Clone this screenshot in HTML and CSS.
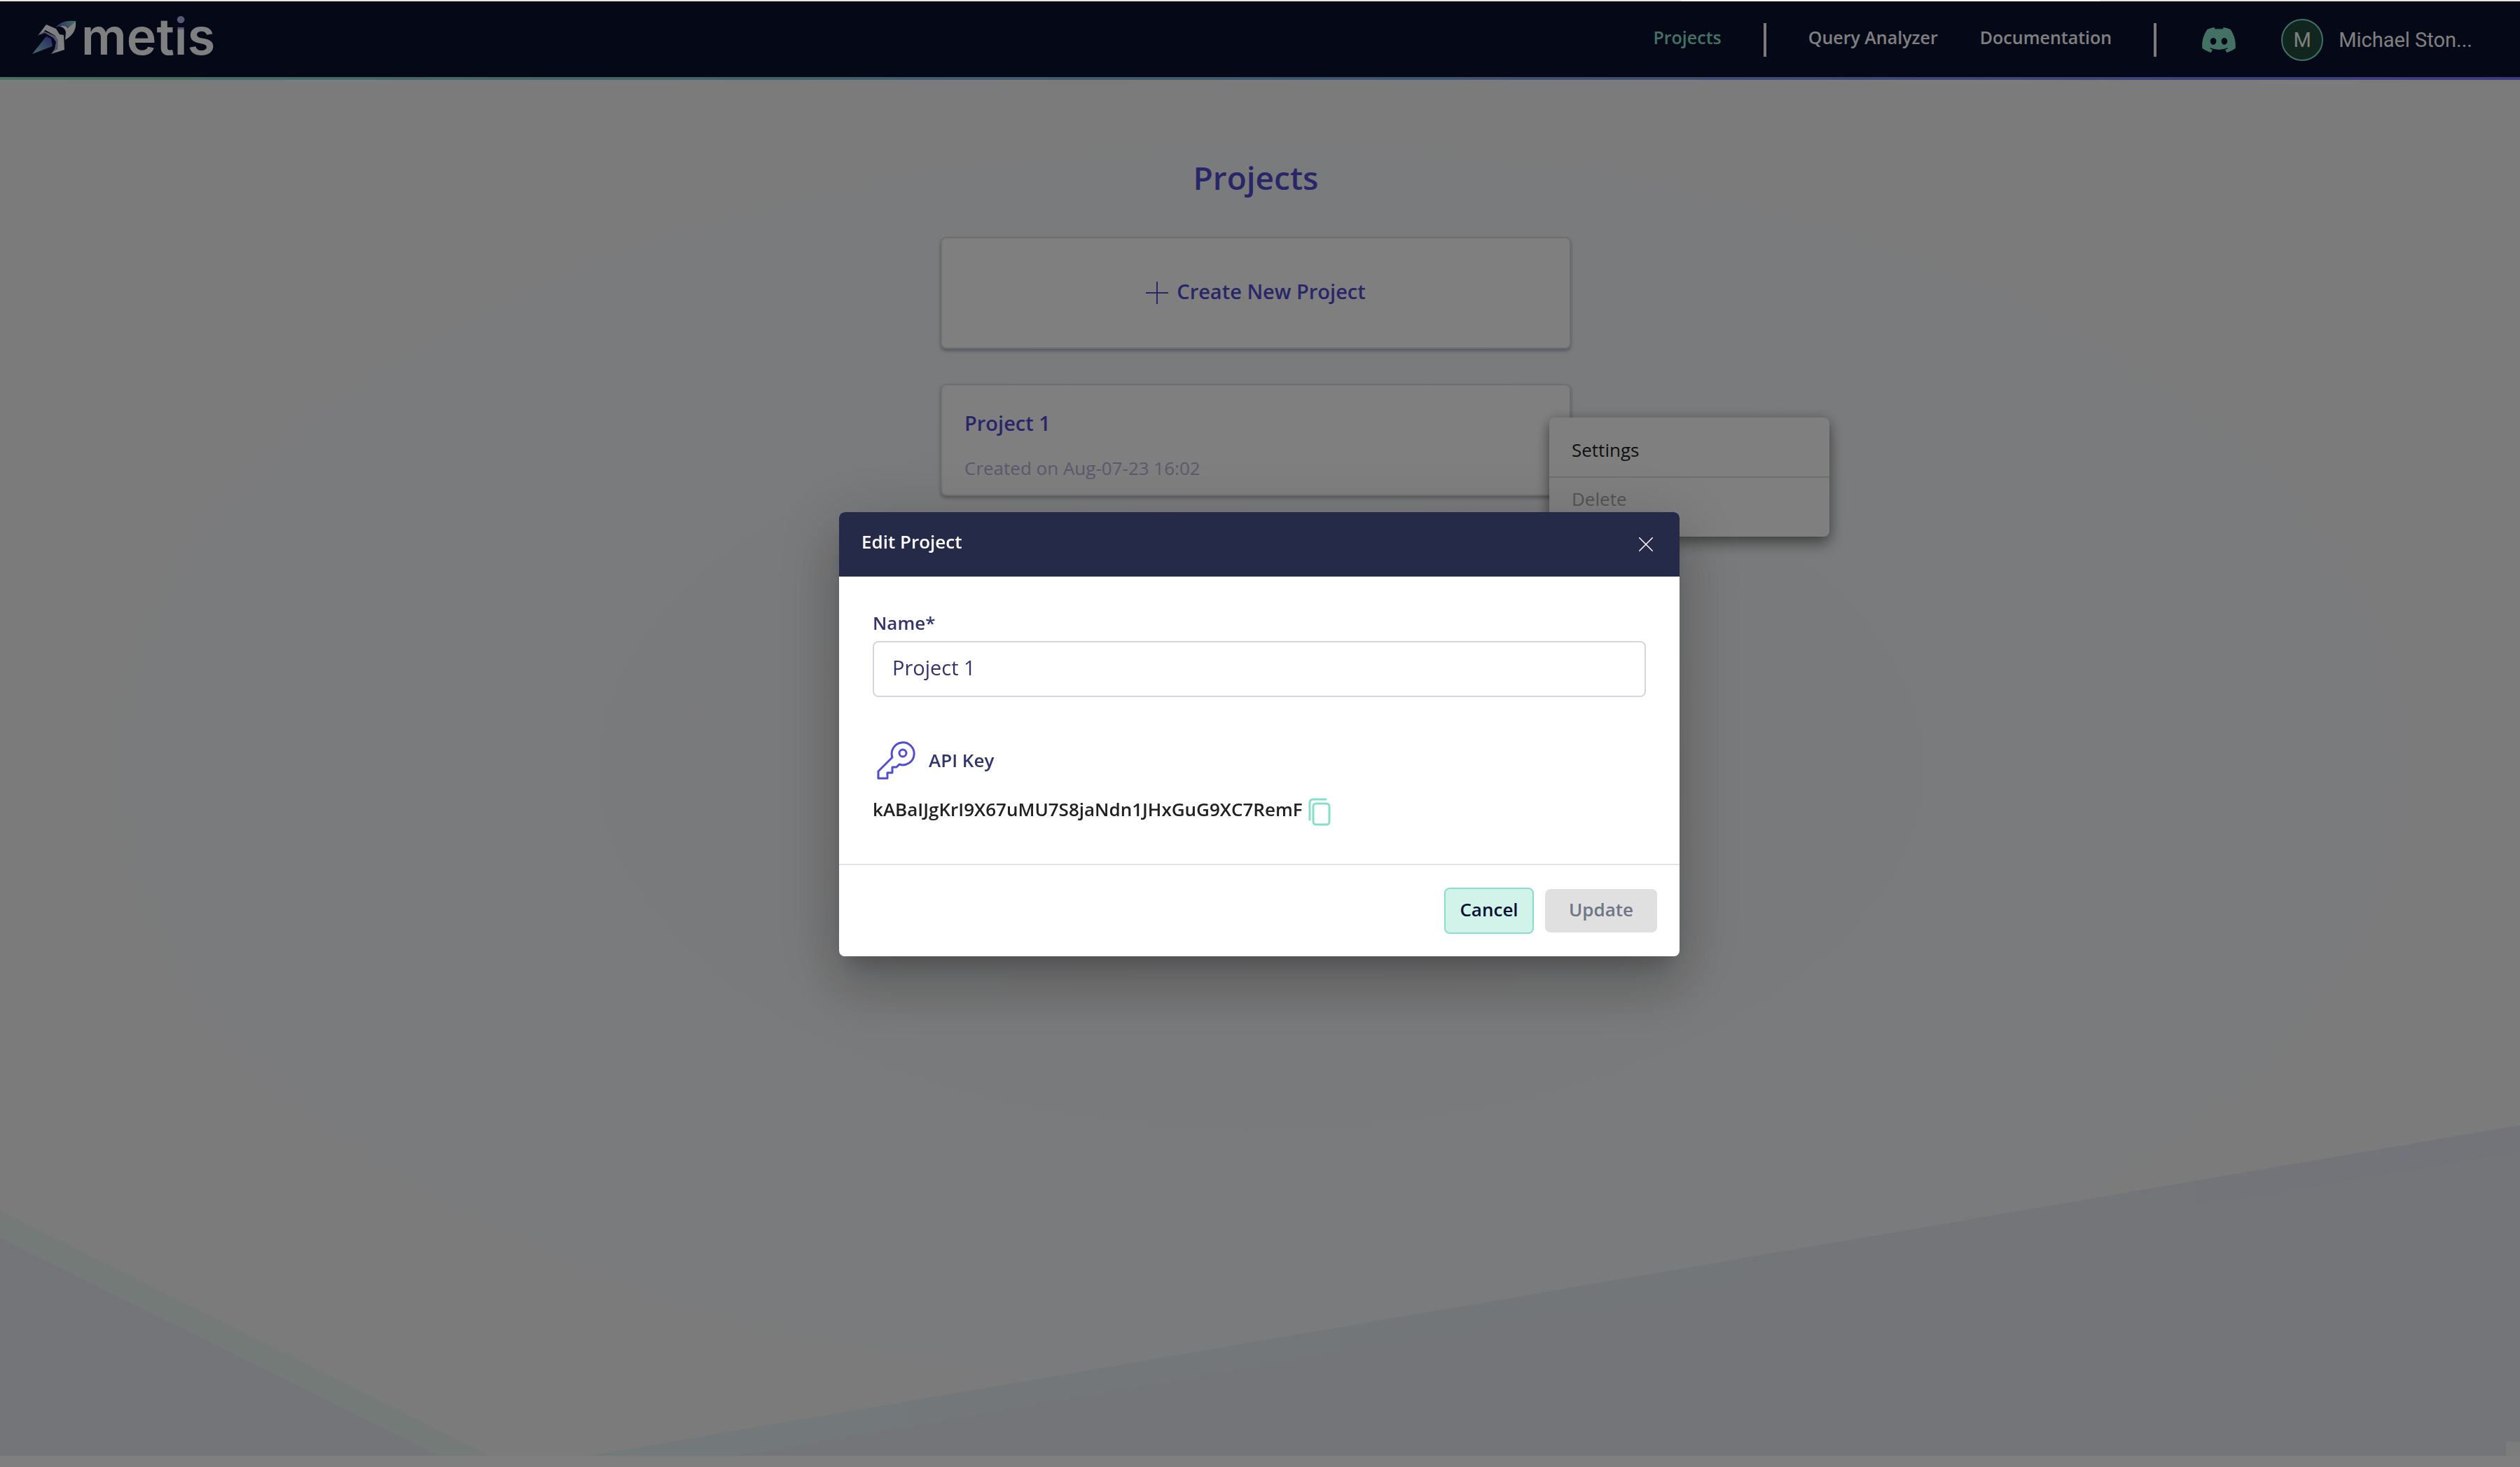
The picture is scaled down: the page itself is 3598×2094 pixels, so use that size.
FILE: index.html
```html
<!DOCTYPE html>
<html lang="en">
<head>
<meta charset="utf-8">
<title>Metis - Projects</title>
<link rel="stylesheet" href="styles.css">
</head>
<body>
<div class="tabstrip"></div>
<div class="app">
  <header class="header">
    <a class="logo" href="#">
      <svg class="logo-mark" viewBox="0 0 64 50" aria-hidden="true">
        <defs>
          <linearGradient id="tail" x1="0" y1="1" x2="1" y2="0"><stop offset="0" stop-color="#86e4c8"/><stop offset="1" stop-color="#504dd0"/></linearGradient>
          <linearGradient id="nose" x1="0" y1="0" x2="1" y2="0"><stop offset="0" stop-color="#504dd0"/><stop offset="1" stop-color="#86e4c8"/></linearGradient>
        </defs>
        <path d="M0 48L20 23L27 26L29 37Z" fill="url(#tail)"/>
        <path d="M16 15L34 23L38 30L35 43L27 48L32 41L34 31L30 25L18 18L10 21Z" fill="#a9a6e8"/>
        <path d="M8 22L20 6L34 12L39 20L45 21L46 42L27 48L36 41L37 29L33 22L19 14Z" fill="#fff"/>
        <path d="M33 10Q42 -1 62 1Q63 4 60 5L52 11Q47 5 38 9Z" fill="url(#nose)"/>
        <path d="M62 2Q64 18 47 28L48 17Q46 9 39 9Q46 5 51 11Z" fill="#fff"/>
      </svg>
      <span class="logo-text">met<span class="logo-i">i</span>s</span>
    </a>
    <nav class="nav">
      <a class="nav-link active" href="#">Projects</a>
      <span class="separator"></span>
      <a class="nav-link" href="#">Query Analyzer</a>
      <a class="nav-link" href="#">Documentation</a>
      <span class="separator"></span>
      <a class="discord" href="#" aria-label="Discord">
        <svg viewBox="0 0 127 96" width="48" height="36" fill="#86e4c8"><path d="M107.700 8.070A105.150 105.150 0 0 0 81.470 0a72.060 72.060 0 0 0-3.360 6.830 97.680 97.680 0 0 0-29.110 0A72.370 72.370 0 0 0 45.640 0a105.890 105.890 0 0 0-26.250 8.090C2.790 32.650-1.710 56.600.540 80.210a105.730 105.730 0 0 0 32.170 16.150 77.700 77.700 0 0 0 6.890-11.110 68.420 68.420 0 0 1-10.850-5.180c.910-.660 1.800-1.340 2.660-2a75.570 75.570 0 0 0 64.320 0c.870.710 1.760 1.390 2.660 2a68.680 68.680 0 0 1-10.870 5.190 77 77 0 0 0 6.890 11.100 105.250 105.250 0 0 0 32.190-16.140c2.640-27.380-4.510-51.110-18.900-72.150ZM42.450 65.690C36.180 65.690 31 60 31 53s5-12.740 11.430-12.740S54 46 53.890 53s-5.050 12.690-11.440 12.690Zm42.240 0C78.410 65.690 73.250 60 73.250 53s5-12.740 11.440-12.740S96.230 46 96.120 53s-5.040 12.690-11.430 12.690Z"/></svg>
      </a>
      <button class="account" type="button"><span class="avatar">M</span><span>Michael Ston...</span></button>
    </nav>
  </header>
  <main class="main">
    <svg class="backdrop-art" viewBox="0 0 3598 1964" preserveAspectRatio="none" aria-hidden="true">
      <defs><linearGradient id="band" x1="0" x2="1" y1="0" y2="0"><stop offset="0" stop-color="#e6f1f4"/><stop offset="1" stop-color="#e6e8f2"/></linearGradient></defs>
      <path d="M0 1614L698 1964H0Z" fill="#e8f4f0"/>
      <path d="M0 1653L626 1964H0Z" fill="#e8eaf2"/>
      <path d="M841 1964L3598 1492V1964Z" fill="url(#band)"/>
      <path d="M1050 1964L3598 1529V1964Z" fill="#e8eaf2"/>
      <path d="M3578 1944H3598V1964H3578Z" fill="#f8f8f8"/>
    </svg>
    <div class="content">
      <h1 class="title">Projects</h1>
      <button class="card create" type="button">
        <svg width="32" height="32" viewBox="0 0 32 32" aria-hidden="true"><path d="M16 0V32M0 16H32" stroke="#504dd0" stroke-width="2"/></svg>
        <span class="create-text">Create New Project</span>
      </button>
      <article class="card project">
        <h2 class="project-name">Project 1</h2>
        <p class="project-date">Created on Aug-07-23 16:02</p>
        <div class="menu">
          <button class="menu-item" type="button">Settings</button>
          <button class="menu-item" type="button" disabled>Delete</button>
        </div>
      </article>
    </div>
  </main>
  <footer class="footer"></footer>
</div>
<div class="overlay">
  <form class="dialog" role="dialog" aria-labelledby="dialog-title">
    <div class="dialog-header">
      <h2 class="dialog-title" id="dialog-title">Edit Project</h2>
      <button class="close" type="button" aria-label="Close"><svg width="20" height="20" viewBox="0 0 20 20"><path d="M0 0L20 20M20 0L0 20" stroke="#fff" stroke-width="1.500"/></svg></button>
    </div>
    <div class="dialog-body">
      <label class="label" for="name">Name*</label>
      <input class="input" id="name" type="text" value="Project 1">
      <div class="api">
        <svg width="56" height="56" viewBox="0 0 56 56" fill="none" stroke="#504dd0" stroke-width="3" stroke-linejoin="round" aria-hidden="true"><path d="M22 24A16 16 0 1 1 32 34L28 38H22V46H15V54H2V44Z"/><circle cx="37" cy="18" r="5"/></svg>
        <span>API Key</span>
      </div>
      <div class="key">
        <span class="key-text">kABaIJgKrI9X67uMU7S8jaNdn1JHxGuG9XC7RemF</span>
        <button class="copy" type="button" aria-label="Copy"><svg width="32" height="40" viewBox="0 0 32 40" fill="none" stroke="#86dfc8" stroke-width="3" stroke-linecap="round"><path d="M2 31V7Q2 2 7 2H25"/><rect x="7" y="8" width="23" height="30" rx="4"/></svg></button>
      </div>
    </div>
    <div class="dialog-footer">
      <button class="btn cancel" type="button">Cancel</button>
      <button class="btn update" type="submit" disabled>Update</button>
    </div>
  </form>
</div>
</body>
</html>
```
FILE: styles.css
```css
* { box-sizing: border-box; }
body { margin: 0; font-family: "Open Sans", sans-serif; font-size: 26px; font-weight: 600; color: #212121; }
h1, h2, p { margin: 0; font-weight: 600; }
button { margin: 0; padding: 0; border: 0; background: none; font: inherit; color: inherit; }
a { color: inherit; text-decoration: none; }
svg { display: block; }

.tabstrip { height: 2px; background: linear-gradient(90deg, #e6e5e6 0 2400px, #fafafa 2400px 2998px, #e6e5e6 2998px); }
.app { display: flex; flex-direction: column; min-height: calc(100vh - 2px); }

.header {
  display: flex; align-items: center; justify-content: space-between;
  height: 112px; padding: 0 68px 0 46px; background: linear-gradient(#000 0 2px, #08102f 2px);
  border-bottom: 4px solid;
  border-image: linear-gradient(90deg, #86e4c8, #7878fa) 4;
  color: #fff;
}
.logo { display: flex; align-items: center; gap: 6px; height: 104px; padding-bottom: 4px; }
.logo-mark { width: 64px; height: 50px; }
.logo-text { padding-bottom: 4px; font-family: Inter, sans-serif; font-size: 72px; line-height: 96px; font-weight: 600; }
.logo-i { color: transparent; background: linear-gradient(#b4b0f0 0 34px, #fff 34px); background-clip: text; -webkit-background-clip: text; }
.nav { display: flex; align-items: center; gap: 60px; padding-top: 2px; }
.nav-link { padding-bottom: 8px; font-size: 25px; line-height: 36px; }
.nav-link.active { color: #86e4c8; }
.separator { width: 4px; height: 48px; background: #f6f6f6; }
.discord { margin: 0 5px; }
.account { display: flex; align-items: center; gap: 22px; font-family: Roboto, sans-serif; font-size: 29px; font-weight: 400; }
.avatar { display: grid; place-items: center; width: 60px; height: 60px; border: 2px solid #86e4c8; border-radius: 50%; background: #204c3c; }

.main { position: relative; flex: 1; padding: 107px 12px 0 0; background: radial-gradient(closest-side, #f2f2f4, #f4f6f8 60%, #f6f7f8); }
.backdrop-art { position: absolute; inset: 0; width: 100%; height: 100%; }
.content { position: relative; display: flex; flex-direction: column; width: 900px; margin: 0 auto; }
.title { margin-bottom: 53px; font-size: 46px; line-height: 64px; text-align: center; color: #504dd0; }
.card { height: 160px; border: 2px solid #dcdce6; border-radius: 8px; background: #fff; box-shadow: 0 3px 5px rgba(40, 40, 80, .35); color: #504dd0; }
.create { display: flex; align-items: center; justify-content: center; gap: 12px; margin-bottom: 50px; font-size: 29px; line-height: 40px; }
.create-text { padding-bottom: 4px; }
.project { position: relative; padding: 30px 32px; }
.project-name { font-size: 29px; line-height: 48px; }
.project-date { margin-top: 22px; font-weight: 500; line-height: 36px; color: #b4b4dc; }
.menu { position: absolute; top: 46px; left: 867px; width: 400px; height: 170px; border-radius: 8px; background: #fff; box-shadow: 0 10px 20px rgba(0, 0, 0, .4), 0 0 16px rgba(0, 0, 0, .16); }
.menu-item { display: block; width: 100%; padding: 28px 32px 20px; font-weight: 500; line-height: 36px; text-align: left; color: #212121; }
.menu-item + .menu-item { padding-top: 12px; border-top: 2px solid #e0e0e0; }
.menu-item:disabled { color: #a8a8a8; }
.footer { height: 16px; background: #fff; }

.overlay { position: fixed; inset: 2px 0 0; display: flex; align-items: center; justify-content: center; padding-right: 2px; background: rgba(0, 0, 0, .5); }
.dialog { width: 1200px; border-radius: 8px; overflow: hidden; background: #fff; box-shadow: 0 22px 30px -14px rgba(0, 0, 0, .2), 0 48px 76px 6px rgba(0, 0, 0, .14), 0 18px 92px 16px rgba(0, 0, 0, .12); }
.dialog-header { display: flex; align-items: center; justify-content: space-between; height: 92px; padding: 0 38px 0 32px; background: #262a49; color: #fff; }
.dialog-title { padding-bottom: 8px; font-size: 26px; line-height: 36px; }
.dialog-body { padding: 48px 48px 54px; }
.label { display: block; margin-bottom: 8px; line-height: 36px; color: #34346c; }
.input { display: block; width: 100%; height: 80px; padding: 0 26px 6px; border: 2px solid #d6d5e0; border-radius: 8px; background: #fff; font: 400 29px "Open Sans", sans-serif; color: #34346c; }
.api { display: flex; align-items: center; gap: 18px; margin: 62px 0 26px; padding-left: 6px; color: #34346c; }
.key { display: flex; align-items: center; gap: 8px; height: 40px; }
.key-text { padding-bottom: 8px; }
.dialog-footer { display: flex; align-items: center; justify-content: flex-end; gap: 16px; height: 132px; padding: 0 32px; border-top: 2px solid #e0e3f4; }
.btn { padding-bottom: 4px; border-radius: 8px; }
.cancel { width: 128px; height: 66px; border: 2px solid #86dfc8; background: #d2f3ea; color: #0a1034; }
.update { width: 160px; height: 62px; background: #e0e0e0; color: #6e7586; }
```
